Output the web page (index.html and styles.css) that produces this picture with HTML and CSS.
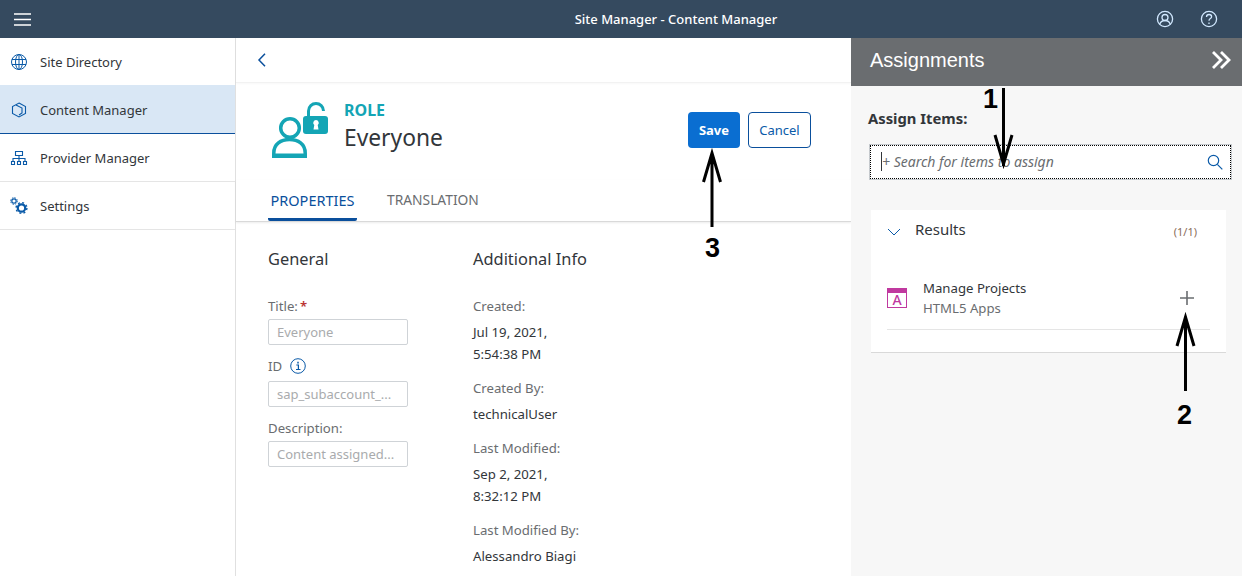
FILE: index.html
```html
<!DOCTYPE html>
<html lang="en">
<head>
<meta charset="utf-8">
<title>Site Manager - Content Manager</title>
<link rel="stylesheet" href="styles.css">
</head>
<body>
<header class="shell">
  <svg class="burger" width="18" height="14" viewBox="0 0 18 14"><path d="M0 2h17M0 7.500h17M0 13h17" stroke="#fff" stroke-width="1.500" fill="none"/></svg>
  <div class="shell-title">Site Manager - Content Manager</div>
  <div class="shell-icons">
    <svg width="18" height="18" viewBox="0 0 18 18" fill="none" stroke="#d1e8ff" stroke-width="1.300"><circle cx="9" cy="9" r="7.600"/><circle cx="9" cy="7.500" r="3"/><path d="M3.700 14.200c1-2.500 3-3.700 5.300-3.700s4.300 1.200 5.300 3.700"/></svg>
    <svg width="18" height="18" viewBox="0 0 18 18" fill="none" stroke="#d1e8ff" stroke-width="1.300"><circle cx="9" cy="9" r="7.600"/><path d="M6.500 7c0-1.500 1.100-2.500 2.600-2.500s2.500 1 2.500 2.200c0 1.900-2.600 1.900-2.600 4"/><path d="M9 12.500v1.500"/></svg>
  </div>
</header>
<div class="main">
  <nav class="side">
    <a class="nav-item">
      <svg class="nav-icon" width="18" height="18" viewBox="0 0 18 18" fill="none" stroke="#0a5aa8" stroke-width="1"><circle cx="9" cy="9" r="7.500"/><ellipse cx="9" cy="9" rx="3.500" ry="7.500"/><path d="M9 1.500v15M2 6.500h14M2 11.500h14"/></svg>
      <span>Site Directory</span>
    </a>
    <a class="nav-item active">
      <svg class="nav-icon" width="18" height="18" viewBox="0 0 18 18" fill="none" stroke="#0a5aa8" stroke-width="1.100"><path d="M9 2l6.500 3.500v7L9 16l-6.500-3.500v-7z"/><path d="M6 4l6 3v5l-3 2"/></svg>
      <span>Content Manager</span>
    </a>
    <a class="nav-item">
      <svg class="nav-icon" width="18" height="18" viewBox="0 0 18 18" fill="none" stroke="#0a5aa8" stroke-width="1.100"><path d="M5.500 2.500h7v4h-7zM9 6.500v3M3 12.500v-3h12v3M9 9.500v3M1.500 12.500h3v3h-3zM7.500 12.500h3v3h-3zM13.500 12.500h3v3h-3z"/></svg>
      <span>Provider Manager</span>
    </a>
    <a class="nav-item">
      <svg class="nav-icon" width="18" height="18" viewBox="0 0 18 18" fill="none" stroke="#0a5aa8"><circle cx="11.500" cy="11" r="3.700" stroke-width="2.200"/><circle cx="11.500" cy="11" r="5.400" stroke-width="1.400" stroke-dasharray="2 2.240"/><circle cx="4" cy="4" r="2.200" stroke-width="1.200"/><circle cx="4" cy="4" r="3.300" stroke-width="1" stroke-dasharray="1.500 1.090"/></svg>
      <span>Settings</span>
    </a>
  </nav>

  <section class="center">
    <div class="backbar">
      <svg width="10" height="14" viewBox="0 0 10 14" fill="none" stroke="#0a4f9c" stroke-width="1.500"><path d="M8 .8L2 7l6 6.200"/></svg>
    </div>
    <div class="objhead">
      <svg class="role-icon" width="60" height="58" viewBox="0 0 60 58" fill="#14a5b5">
        <circle cx="19" cy="27" r="9.300" fill="none" stroke="#14a5b5" stroke-width="3.500"/>
        <path d="M2.800 55v-3c0-9 7-13.500 15.700-13.500S34.200 43 34.200 52v3z" fill="none" stroke="#14a5b5" stroke-width="3.500"/>
        <path d="M1 52.500h35V57H1z"/>
        <rect x="32" y="15" width="25" height="18" rx="3"/>
        <path d="M37.500 16V10c0-4.500 3.500-7.500 7.500-7.500s7.500 3 7.500 7.500" fill="none" stroke="#14a5b5" stroke-width="3"/>
        <path d="M45 19a2.800 2.800 0 0 1 1.700 5l.8 4.500h-5l.8-4.500a2.800 2.800 0 0 1 1.700-5z" fill="#fff"/>
      </svg>
      <div class="objtitle">
        <div class="objtype">ROLE</div>
        <div class="objname">Everyone</div>
      </div>
      <div class="objactions">
        <button class="btn btn-primary">Save</button>
        <button class="btn btn-ghost">Cancel</button>
      </div>
    </div>
    <div class="tabs">
      <div class="tab tab-on">PROPERTIES</div>
      <div class="tab">TRANSLATION</div>
    </div>
    <div class="form">
      <div class="col col-general">
        <h2>General</h2>
        <label class="lbl lbl-first">Title:<span class="req">*</span></label>
        <div class="inp">Everyone</div>
        <label class="lbl lbl-id">ID
          <svg width="16" height="16" viewBox="0 0 16 16" fill="none" stroke="#0a5aa8" stroke-width="1"><circle cx="8" cy="8" r="7.300"/><path d="M6.300 7h2.100v4.500M6 11.500h4.500" stroke-width="1.200"/><path d="M8 3.700v1.800" stroke-width="1.500"/></svg>
        </label>
        <div class="inp inp-id">sap_subaccount_...</div>
        <label class="lbl lbl-desc">Description:</label>
        <div class="inp">Content assigned...</div>
      </div>
      <div class="col col-info">
        <h2>Additional Info</h2>
        <div class="k k-first">Created:</div>
        <div class="v">Jul 19, 2021,<br>5:54:38 PM</div>
        <div class="k">Created By:</div>
        <div class="v">technicalUser</div>
        <div class="k">Last Modified:</div>
        <div class="v">Sep 2, 2021,<br>8:32:12 PM</div>
        <div class="k">Last Modified By:</div>
        <div class="v">Alessandro Biagi</div>
      </div>
    </div>
  </section>

  <aside class="panel">
    <div class="panel-head">
      <span class="panel-title">Assignments</span>
      <svg width="20" height="20" viewBox="0 0 20 20" fill="none" stroke="#fff" stroke-width="2.800"><path d="M2 2l8 8-8 8M10 2l8 8-8 8"/></svg>
    </div>
    <div class="panel-body">
      <div class="assign-label">Assign Items:</div>
      <div class="search">
        <span class="search-text">+ Search for items to assign</span>
        <svg width="16" height="16" viewBox="0 0 16 16" fill="none" stroke="#0a5aa8" stroke-width="1.200"><circle cx="6.500" cy="6.500" r="5.200"/><path d="M10.300 10.300l5 5"/></svg>
      </div>
      <div class="results">
        <div class="res-head">
          <svg width="14" height="8" viewBox="0 0 14 8" fill="none" stroke="#0a5aa8" stroke-width="1"><path d="M1 1l6 6 6-6"/></svg>
          <span class="res-title">Results</span>
          <span class="res-count">(1/1)</span>
        </div>
        <div class="res-item">
          <svg class="app-icon" width="20" height="20" viewBox="0 0 20 20" fill="none"><rect x=".5" y=".5" width="19" height="19" fill="#fff" stroke="#c0399f"/><rect x="0" y="0" width="20" height="5" fill="#c0399f"/><text x="10" y="17" text-anchor="middle" class="app-letter">A</text></svg>
          <div class="res-text">
            <div class="res-name">Manage Projects</div>
            <div class="res-type">HTML5 Apps</div>
          </div>
          <svg class="plus" width="16" height="16" viewBox="0 0 16 16" fill="none" stroke="#6a6d70" stroke-width="1.600"><path d="M8 1v14M1 8h14"/></svg>
        </div>
      </div>
    </div>
  </aside>
</div>

<div class="marks">
  <svg class="marks-svg" width="1242" height="576" viewBox="0 0 1242 576" fill="none" stroke="#000" stroke-width="3">
    <path d="M1003.500 88v78M995 135l8.500 29 8.500-29"/>
    <path d="M1185.500 391v-74M1177 346l8.500-29 8.500 29"/>
    <path d="M712 227v-73M703.500 182l8.500-29 8.500 29"/>
  </svg>
  <span class="mark m1">1</span>
  <span class="mark m2">2</span>
  <span class="mark m3">3</span>
</div>
</body>
</html>
```
FILE: styles.css
```css
* { box-sizing: border-box; }
html, body { margin: 0; padding: 0; height: 576px; overflow: hidden; }
body { font-family: "Noto Sans", "Open Sans", sans-serif; font-size: 14px; color: #32363a; background: #fff; position: relative; }

.shell { height: 38px; background: #354a5f; display: flex; align-items: center; position: relative; padding: 0 24px 0 14px; justify-content: space-between; }
.shell-title { color: #fff; font-size: 13px; font-weight: 500; position: absolute; left: 0; right: 0; text-align: center; padding-left: 110px; }
.shell-icons { display: flex; gap: 26px; position: relative; }

.main { display: flex; height: 538px; }
.side { width: 236px; border-right: 1px solid #e0e0e0; flex: none; }
.nav-item { height: 48px; display: flex; align-items: center; padding-left: 10px; gap: 12px; border-bottom: 1px solid #e5e5e5; font-size: 13px; color: #32363a; }
.nav-item:first-child { height: 47px; border-bottom: 0; }
.nav-item.active { height: 49px; padding-top: 1px; background: #d9e7f5; border-bottom: 1px solid #0a4f9c; }
.nav-icon { flex: none; }

.center { width: 615px; flex: none; display: flex; flex-direction: column; }
.backbar { height: 45px; display: flex; align-items: center; padding-left: 21px; border-bottom: 1px solid #f2f2f2; box-shadow: 0 1px 2px rgba(0,0,0,.03); }
.objhead { height: 97px; display: flex; padding: 18px 40px 0 35px; }
.role-icon { flex: none; margin-right: 13px; }
.objtitle { flex: 1; }
.objtype { color: #14a5b5; font-size: 16px; font-weight: 700; line-height: 19px; }
.objname { font-size: 22.800px; line-height: 32px; margin-top: 2px; color: #32363a; }
.objactions { display: flex; gap: 8px; padding-top: 11px; align-items: flex-start; }
.btn { height: 36px; border-radius: 4px; font-family: inherit; font-size: 13px; padding: 0; }
.btn-primary { width: 52px; background: #0a6ed1; color: #fff; border: 0; font-weight: 700; }
.btn-ghost { width: 63px; background: #fff; color: #0a5aa8; border: 1px solid #0a4f9c; }

.tabs { height: 42px; display: flex; padding-left: 32px; gap: 30px; border-bottom: 1px solid #d9d9d9; box-shadow: 0 1px 2px rgba(0,0,0,.08); }
.tab { height: 41px; line-height: 40px; font-size: 13.800px; color: #6a6d70; text-align: center; }
.tab-on { color: #0a4f9c; border-bottom: 3px solid #0a4f9c; border-radius: 0 0 2px 2px; width: 89px; font-size: 14.500px; }

.form { display: flex; padding: 25px 0 0 32px; }
.col h2 { font-size: 16.400px; font-weight: 400; margin: 0; line-height: 24px; color: #32363a; }
.col-general { width: 205px; }
.lbl { display: flex; align-items: center; font-size: 13.200px; color: #6a6d70; line-height: 18px; }
.lbl-first { margin-top: 26px; }
.lbl-id { margin-top: 12px; gap: 8px; }
.lbl-desc { margin-top: 12px; }
.req { color: #b33; margin-left: 2px; font-weight: 600; }
.inp { width: 140px; height: 26px; border: 1px solid #cfd3d7; border-radius: 2px; margin-top: 4px; padding-left: 8px; font-size: 13px; line-height: 24px; color: #a9abad; white-space: nowrap; overflow: hidden; }
.inp-id { margin-top: 6px; }
.k { font-size: 13.200px; color: #6a6d70; line-height: 18px; margin-top: 14px; }
.k-first { margin-top: 26px; }
.v { font-size: 13.200px; color: #32363a; line-height: 22px; margin-top: 6px; }

.panel { flex: 1; background: #f7f7f7; display: flex; flex-direction: column; }
.panel-head { height: 48px; background: #6a6d70; display: flex; align-items: center; justify-content: space-between; padding: 0 11px 4px 19px; }
.panel-title { color: #fff; font-size: 20px; font-family: "Liberation Sans", Arial, sans-serif; }
.panel-body { padding: 22px 11px 0 19px; }
.assign-label { font-size: 14.800px; font-weight: 700; color: #32363a; line-height: 20px; margin-left: -2px; }
.search { height: 34px; margin-top: 17px; background: #fff; border: 1px dotted #000; outline: 1px solid #c5c9cd; display: flex; align-items: center; justify-content: space-between; padding: 0 7px 0 10px; }
.search-text { font-style: italic; color: #6a6d70; font-size: 14px; border-left: 1px solid #32363a; line-height: 19px; margin-top: -2px; }
.results { background: #fff; margin: 31px 5px 0 1px; height: 143px; border-bottom: 1px solid #d9d9d9; padding: 0 16px; }
.res-head { display: flex; align-items: center; height: 37px; }
.res-head svg { margin-top: 7px; }
.res-title { font-size: 15px; margin-left: 14px; flex: 1; }
.res-count { font-size: 11px; color: #8a6d5a; margin: 5px 13px 0 0; }
.res-item { display: flex; align-items: center; height: 52px; margin-top: 31px; border-bottom: 1px solid #e5e5e5; padding-right: 15px; }
.app-icon { margin-top: -11px; }
.app-letter { font-family: "Noto Sans", sans-serif; font-size: 14px; font-weight: 500; fill: #c0399f; }
.res-text { flex: 1; margin-left: 16px; margin-top: -12px; }
.res-name { font-size: 13.200px; line-height: 20px; }
.res-type { font-size: 13.200px; line-height: 20px; color: #6a6d70; }
.plus { margin-top: -11px; }

.mark { position: absolute; font-family: "Liberation Sans", Arial, sans-serif; font-weight: 700; font-size: 27px; line-height: 30px; color: #000; }
.marks-svg { position: absolute; left: 0; top: 0; pointer-events: none; }
.m1 { left: 983px; top: 84px; }
.m2 { left: 1177px; top: 400px; }
.m3 { left: 705px; top: 233px; }
```
